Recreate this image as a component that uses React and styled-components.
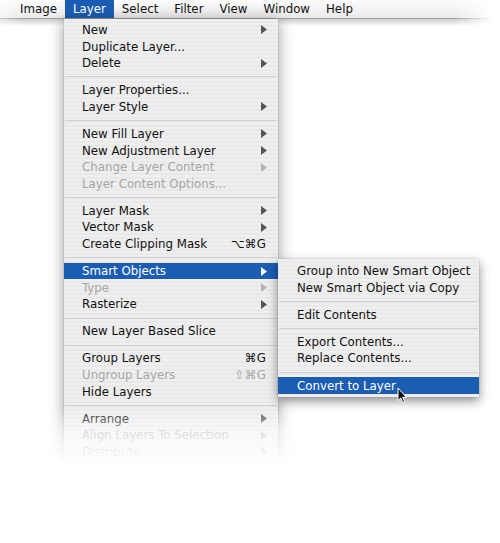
import React from 'react'
import styled, { createGlobalStyle } from 'styled-components'

const RowHeight = 16.6
const SeparatorHeight = 10.5
const Highlight = '#1b5db3'

const GlobalStyle = createGlobalStyle`
  html, body {
    margin: 0;
    padding: 0;
    background: #ffffff;
  }
  body {
    font-family: "DejaVu Sans", "Lucida Grande", sans-serif;
    font-size: 11.8px;
    color: #111111;
  }
`

const Page = styled.div`
  position: relative;
  width: 500px;
  height: 543px;
  overflow: hidden;
  background: #ffffff;
`

const MenuBar = styled.div`
  position: relative;
  display: flex;
  height: 18px;
  padding-left: 12px;

  &::before {
    content: '';
    position: absolute;
    left: 0;
    right: 0;
    top: 0;
    height: 26px;
    background: linear-gradient(
      to bottom,
      #fbfbfb 0,
      #ebebeb 18px,
      #9c9c9c 18px,
      #a4a4a4 19px,
      rgba(0, 0, 0, 0.2) 19px,
      rgba(0, 0, 0, 0) 26px
    );
    -webkit-mask-image: linear-gradient(to right, rgba(0, 0, 0, 0.5) 0, #000 22px, #000 455px, transparent 492px);
    mask-image: linear-gradient(to right, rgba(0, 0, 0, 0.5) 0, #000 22px, #000 455px, transparent 492px);
  }
`

const BarItem = styled.div`
  position: relative;
  z-index: 1;
  display: flex;
  align-items: center;
  height: 18px;
  padding: 0 8px;
  background: ${({ active }) => active ? Highlight : 'transparent'};
  color: ${({ active }) => active ? '#ffffff' : '#111111'};
`

const Menu = styled.div`
  position: absolute;
  z-index: 2;
  left: ${({ left }) => left}px;
  top: ${({ top }) => top}px;
  width: ${({ width }) => width}px;
  padding: 2.7px 0 3.5px;
  background: repeating-linear-gradient(to bottom, #efefef 0, #efefef 2px, #e9e9e9 2px, #e9e9e9 4px);
  box-shadow: 0 3px 14px rgba(0, 0, 0, 0.42), 0 0 1px rgba(0, 0, 0, 0.35);
`

const FadeOut = styled.div`
  position: absolute;
  left: -24px;
  right: -24px;
  top: ${({ top }) => top}px;
  height: 110px;
  background: linear-gradient(to bottom, rgba(255, 255, 255, 0) 0, rgba(255, 255, 255, 0.6) 24px, #ffffff 60px);
  pointer-events: none;
`

const SubMenu = styled(Menu)`
  z-index: 3;
  padding: 3.5px 0 3.5px;
  box-shadow: 0 4px 10px rgba(0, 0, 0, 0.45), 0 0 1px rgba(0, 0, 0, 0.35);
`

const Row = styled.div`
  position: relative;
  display: flex;
  align-items: center;
  height: ${RowHeight}px;
  padding: 0 11px 0 ${({ indent }) => indent}px;
  white-space: nowrap;
  background: ${({ active }) => active ? Highlight : 'transparent'};
  color: ${({ active, disabled }) => active ? '#ffffff' : disabled ? '#a6a6a6' : '#111111'};
`

const Label = styled.span`
  flex: 1;
`

const Shortcut = styled.span`
  margin-right: 1px;
  letter-spacing: 0.2px;
`

const Separator = styled.div`
  position: relative;
  height: ${SeparatorHeight}px;

  &::before {
    content: '';
    position: absolute;
    left: 1px;
    right: 1px;
    top: 5px;
    height: 1px;
    background: #cfcfcf;
  }
`

const Cursor = styled.svg`
  position: absolute;
  z-index: 4;
  left: 397px;
  top: 387px;
`

const Arrow = ({ color }) => (
  <svg width='6' height='9' viewBox='0 0 6 9'>
    <polygon points='0,0 6,4.5 0,9' fill={color}/>
  </svg>
)

const layerMenu = [
  [
    { label: 'New', sub: true },
    { label: 'Duplicate Layer...' },
    { label: 'Delete', sub: true },
  ],
  [
    { label: 'Layer Properties...' },
    { label: 'Layer Style', sub: true },
  ],
  [
    { label: 'New Fill Layer', sub: true },
    { label: 'New Adjustment Layer', sub: true },
    { label: 'Change Layer Content', sub: true, disabled: true },
    { label: 'Layer Content Options...', disabled: true },
  ],
  [
    { label: 'Layer Mask', sub: true },
    { label: 'Vector Mask', sub: true },
    { label: 'Create Clipping Mask', shortcut: '⌥⌘G' },
  ],
  [
    { label: 'Smart Objects', sub: true, active: true, open: true },
    { label: 'Type', sub: true, disabled: true },
    { label: 'Rasterize', sub: true },
  ],
  [
    { label: 'New Layer Based Slice' },
  ],
  [
    { label: 'Group Layers', shortcut: '⌘G' },
    { label: 'Ungroup Layers', shortcut: '⇧⌘G', disabled: true },
    { label: 'Hide Layers' },
  ],
  [
    { label: 'Arrange', sub: true },
    { label: 'Align Layers To Selection', sub: true, disabled: true },
    { label: 'Distribute', sub: true, disabled: true },
  ],
]

const smartMenu = [
  [
    { label: 'Group into New Smart Object' },
    { label: 'New Smart Object via Copy' },
  ],
  [
    { label: 'Edit Contents' },
  ],
  [
    { label: 'Export Contents...' },
    { label: 'Replace Contents...' },
  ],
  [
    { label: 'Convert to Layer', active: true },
  ],
]

const arrowColor = (item) => item.active ? '#ffffff' : item.disabled ? '#b4b4b4' : '#555555'

const MenuItems = ({ groups, indent, renderSub }) => (
  <>
    {groups.map((group, i) => (
      <React.Fragment key={i}>
        {i > 0 && <Separator/>}
        {group.map(item => (
          <Row key={item.label} indent={indent} active={item.active} disabled={item.disabled}>
            <Label>{item.label}</Label>
            {item.shortcut && <Shortcut>{item.shortcut}</Shortcut>}
            {item.sub && <Arrow color={arrowColor(item)}/>}
            {item.open && renderSub && renderSub()}
          </Row>
        ))}
      </React.Fragment>
    ))}
  </>
)

const barItems = ['Image', 'Layer', 'Select', 'Filter', 'View', 'Window', 'Help']

const App = () => {
  return (
    <Page>
      <GlobalStyle/>
      <MenuBar>
        {barItems.map(name => (
          <BarItem key={name} active={name === 'Layer'}>{name}</BarItem>
        ))}
      </MenuBar>

      <Menu left={64} top={19} width={214}>
        <MenuItems
          groups={layerMenu}
          indent={18}
          renderSub={() => (
            <SubMenu left={214} top={-3.5} width={201}>
              <MenuItems groups={smartMenu} indent={19}/>
            </SubMenu>
          )}
        />
        <FadeOut top={388}/>
      </Menu>

      <Cursor width='11' height='17' viewBox='0 0 11 17'>
        <path d='M1 1 L1 13.5 L3.8 11 L5.8 15.6 L7.6 14.8 L5.7 10.3 L9.4 10.3 Z' fill='#111' stroke='#fff' strokeWidth='1' strokeLinejoin='round'/>
      </Cursor>
    </Page>
  )
}

export default App
